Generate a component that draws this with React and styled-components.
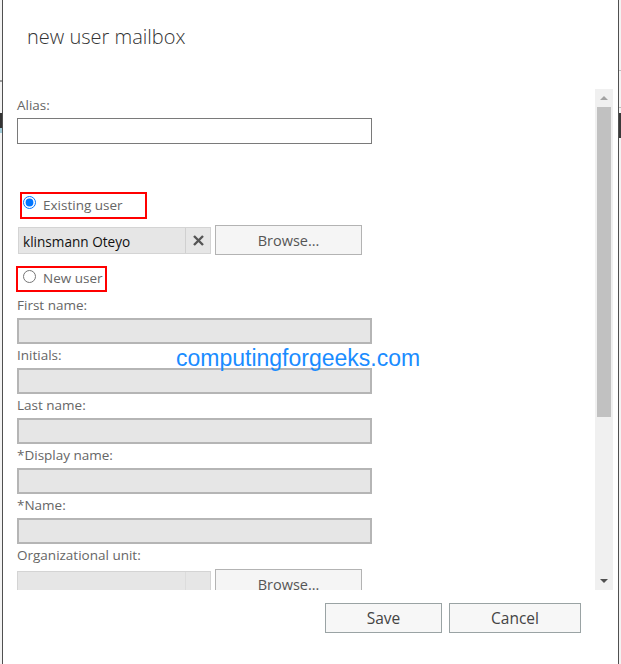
import React from 'react';
import styled, { createGlobalStyle } from 'styled-components';

const Global = createGlobalStyle`
  html, body { margin: 0; padding: 0; }
  body { font-family: "Open Sans", "Noto Sans", sans-serif; background: #f3f3f3; }
  * { box-sizing: border-box; }
`;

const Page = styled.div`
  position: relative;
  display: flex;
  width: 621px;
  height: 664px;
  overflow: hidden;
`;

const Strip = styled.div`
  flex: none;
  width: 2px;
  background: ${(p) => p.$bg};
`;

const Dialog = styled.div`
  flex: 1;
  display: flex;
  flex-direction: column;
  background: #fff;
  border-left: 1px solid #505050;
  border-right: 1px solid #505050;
`;

const Title = styled.h1`
  margin: 0;
  height: 89px;
  padding: 23px 0 0 24px;
  font-size: 20px;
  line-height: 28px;
  font-weight: 300;
  color: #333;
`;

const Body = styled.div`
  display: flex;
  height: 501px;
  margin-right: 5px;
`;

const Content = styled.div`
  flex: 1;
  overflow: hidden;
  padding: 6px 0 0 14px;
`;

const Scrollbar = styled.div`
  flex: none;
  width: 18px;
  display: flex;
  flex-direction: column;
  background: #f0f0f0;
`;

const ScrollButton = styled.div`
  flex: none;
  height: 18px;
  display: flex;
  align-items: center;
  justify-content: center;
`;

const Arrow = styled.span`
  width: 0;
  height: 0;
  border-left: 4px solid transparent;
  border-right: 4px solid transparent;
  ${(p) =>
    p.$dir === 'up'
      ? `border-bottom: 4px solid ${p.$color};`
      : `border-top: 4px solid ${p.$color};`}
`;

const Thumb = styled.div`
  flex: none;
  height: 310px;
  margin: 0 2px;
  background: #c1c1c1;
`;

const Track = styled.div`
  flex: 1;
`;

const Field = styled.div`
  margin-top: ${(p) => p.$mt || 0}px;
  margin-bottom: 1px;
`;

const Label = styled.div`
  height: 20px;
  font-size: 13.5px;
  line-height: 20px;
  color: #666;
  white-space: nowrap;
`;

const TextInput = styled.input`
  display: block;
  width: 355px;
  height: 26px;
  margin: 3px 0 0;
  padding: 0 4px;
  font: inherit;
  border: ${(p) => (p.disabled ? '2px solid #b5b5b5' : '1px solid #7a7a7a')};
  background: ${(p) => (p.disabled ? '#e6e6e6' : '#fff')};
  outline: none;
`;

const Highlight = styled.label`
  display: flex;
  align-items: flex-start;
  gap: 7px;
  width: ${(p) => p.$w}px;
  height: ${(p) => p.$h}px;
  margin: ${(p) => p.$mt}px 0 0 ${(p) => p.$ml}px;
  padding: 2px 0 0 ${(p) => p.$pl}px;
  border: 2px solid #ff0000;
`;

const Radio = styled.input`
  flex: none;
  width: 13px;
  height: 13px;
  margin: 0;
  accent-color: #0075ff;
`;

const RadioText = styled.span`
  font-size: 13.5px;
  line-height: 18px;
  margin-top: ${(p) => p.$ty}px;
  color: #666;
  white-space: nowrap;
`;

const PickerRow = styled.div`
  display: flex;
  align-items: center;
  gap: 4px;
  height: 30px;
  margin: ${(p) => p.$mt}px 0 0 ${(p) => p.$ml}px;
`;

const PickerBox = styled.div`
  display: flex;
  width: ${(p) => p.$w}px;
  height: 27px;
  background: #e6e6e6;
  border: 1px solid #d4d4d4;
`;

const PickerValue = styled.span`
  flex: 1;
  padding-left: 4px;
  font-size: 13.6px;
  line-height: 27px;
  color: #111;
  white-space: nowrap;
`;

const ClearButton = styled.span`
  flex: none;
  width: 25px;
  display: flex;
  align-items: center;
  justify-content: center;
  border-left: 1px solid ${(p) => p.$line};
`;

const BrowseButton = styled.button`
  width: 147px;
  height: 30px;
  padding: 0;
  font-family: inherit;
  font-size: 14.5px;
  color: #555;
  background: #f5f5f5;
  border: 1px solid #b3b3b3;
`;

const Footer = styled.div`
  display: flex;
  justify-content: flex-end;
  gap: 7px;
  padding: 13px 37px 0 0;
`;

const FooterButton = styled.button`
  width: ${(p) => p.$w}px;
  height: 30px;
  padding: 0;
  font-family: inherit;
  font-size: 15.5px;
  color: #444;
  background: #f7f7f7;
  border: 1px solid #9aa3a4;
`;

const Watermark = styled.div`
  position: absolute;
  left: 176px;
  top: 347px;
  font-family: "Liberation Sans", Arial, sans-serif;
  font-size: 23px;
  line-height: 23px;
  color: #1a8cff;
  white-space: nowrap;
`;

const leftBg =
  'linear-gradient(to bottom, #f3f3f3 0 80px, #9a9a9a 80px 82px, #f3f3f3 82px 113px, #333 113px 128px, #9fc9d6 128px 133px, #f3f3f3 133px)';
const rightBg =
  'linear-gradient(to bottom, #f3f3f3 0 70px, #bdbdbd 70px 71px, #f3f3f3 71px 107px, #bdbdbd 107px 108px, #f3f3f3 108px 113px, #3a3a3a 113px 138px, #f3f3f3 138px)';

const ClearIcon = () => (
  <svg width="13" height="13" viewBox="0 0 13 13">
    <path d="M2 2 L11 11 M11 2 L2 11" stroke="#555" strokeWidth="2.4" />
  </svg>
);

const fields = ['First name:', 'Initials:', 'Last name:', '*Display name:', '*Name:'];

export default function App() {
  return (
    <>
      <Global />
      <Page>
        <Strip $bg={leftBg} />
        <Dialog>
          <Title>new user mailbox</Title>
          <Body>
            <Content>
              <Field>
                <Label>Alias:</Label>
                <TextInput type="text" />
              </Field>
              <Highlight $w={127} $h={27} $mt={48} $ml={3} $pl={1}>
                <Radio type="radio" name="usertype" defaultChecked />
                <RadioText $ty={0}>Existing user</RadioText>
              </Highlight>
              <PickerRow $mt={6} $ml={1}>
                <PickerBox $w={193}>
                  <PickerValue>klinsmann Oteyo</PickerValue>
                  <ClearButton $line="#d0d0d0">
                    <ClearIcon />
                  </ClearButton>
                </PickerBox>
                <BrowseButton>Browse...</BrowseButton>
              </PickerRow>
              <Highlight $w={91} $h={26} $mt={11} $ml={-1} $pl={5}>
                <Radio type="radio" name="usertype" />
                <RadioText $ty={-1}>New user</RadioText>
              </Highlight>
              {fields.map((f, i) => (
                <Field key={f} $mt={i === 0 ? 3 : 0}>
                  <Label>{f}</Label>
                  <TextInput type="text" disabled />
                </Field>
              ))}
              <Label>Organizational unit:</Label>
              <PickerRow $mt={4} $ml={0}>
                <PickerBox $w={194}>
                  <PickerValue />
                  <ClearButton $line="#dcdcdc" />
                </PickerBox>
                <BrowseButton>Browse...</BrowseButton>
              </PickerRow>
            </Content>
            <Scrollbar>
              <ScrollButton>
                <Arrow $dir="up" $color="#a3a3a3" />
              </ScrollButton>
              <Thumb />
              <Track />
              <ScrollButton>
                <Arrow $dir="down" $color="#505050" />
              </ScrollButton>
            </Scrollbar>
          </Body>
          <Footer>
            <FooterButton $w={117}>Save</FooterButton>
            <FooterButton $w={132}>Cancel</FooterButton>
          </Footer>
        </Dialog>
        <Strip $bg={rightBg} />
        <Watermark>computingforgeeks.com</Watermark>
      </Page>
    </>
  );
}
